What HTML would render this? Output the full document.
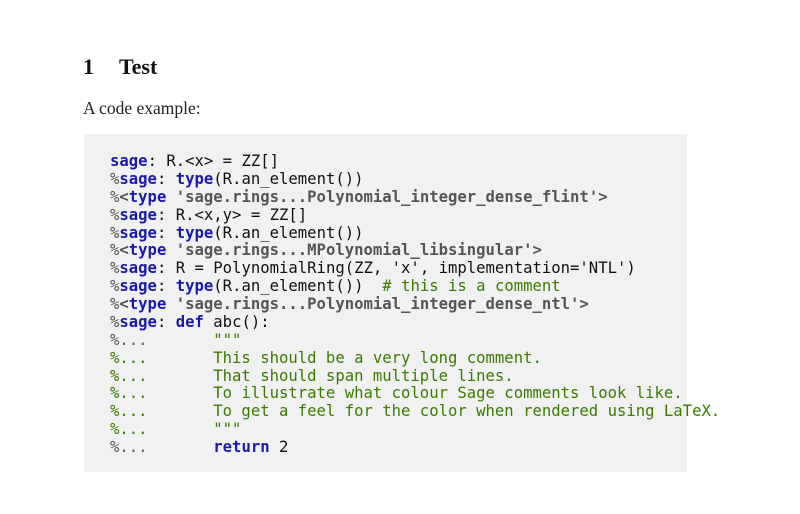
<!DOCTYPE html>
<html><head><meta charset="utf-8"><style>
body{margin:0;width:800px;height:514px;background:#fff;position:relative;overflow:hidden}
.h{position:absolute;left:83px;top:54px;font:bold 22px "Liberation Serif",serif;color:#111}
.h span{position:absolute;left:36px;white-space:nowrap}
.p{position:absolute;left:83px;top:98px;font:17.5px "Liberation Serif",serif;color:#222;white-space:nowrap}
.box{position:absolute;left:84px;top:134px;width:603px;height:338px;background:#f1f1f1}
pre{position:absolute;left:110px;top:153px;margin:0;font:15.6px/17.875px "DejaVu Sans Mono",monospace;color:#111}
.k{color:#1a1aaa;font-weight:bold}
.g{color:#555}
.gb{color:#555;font-weight:bold}
.c{color:#3a7a00}
</style></head><body>
<div class="h">1<span>Test</span></div>
<div class="p">A code example:</div>
<div class="box"></div>
<pre><span class="k">sage</span>: R.&lt;x&gt; = ZZ[]
<span class="g">%</span><span class="k">sage</span>: <span class="k">type</span>(R.an_element())
<span class="g">%</span><span class="gb">&lt;</span><span class="k">type</span> <span class="gb">'sage.rings...Polynomial_integer_dense_flint'&gt;</span>
<span class="g">%</span><span class="k">sage</span>: R.&lt;x,y&gt; = ZZ[]
<span class="g">%</span><span class="k">sage</span>: <span class="k">type</span>(R.an_element())
<span class="g">%</span><span class="gb">&lt;</span><span class="k">type</span> <span class="gb">'sage.rings...MPolynomial_libsingular'&gt;</span>
<span class="g">%</span><span class="k">sage</span>: R = PolynomialRing(ZZ, 'x', implementation='NTL')
<span class="g">%</span><span class="k">sage</span>: <span class="k">type</span>(R.an_element())  <span class="c"># this is a comment</span>
<span class="g">%</span><span class="gb">&lt;</span><span class="k">type</span> <span class="gb">'sage.rings...Polynomial_integer_dense_ntl'&gt;</span>
<span class="g">%</span><span class="k">sage</span>: <span class="k">def</span> abc():
<span class="g">%...</span>       <span class="c">"""</span>
<span class="c">%...       This should be a very long comment.</span>
<span class="c">%...       That should span multiple lines.</span>
<span class="c">%...       To illustrate what colour Sage comments look like.</span>
<span class="c">%...       To get a feel for the color when rendered using LaTeX.</span>
<span class="c">%...       """</span>
<span class="g">%...</span>       <span class="k">return</span> 2</pre>
</body></html>
